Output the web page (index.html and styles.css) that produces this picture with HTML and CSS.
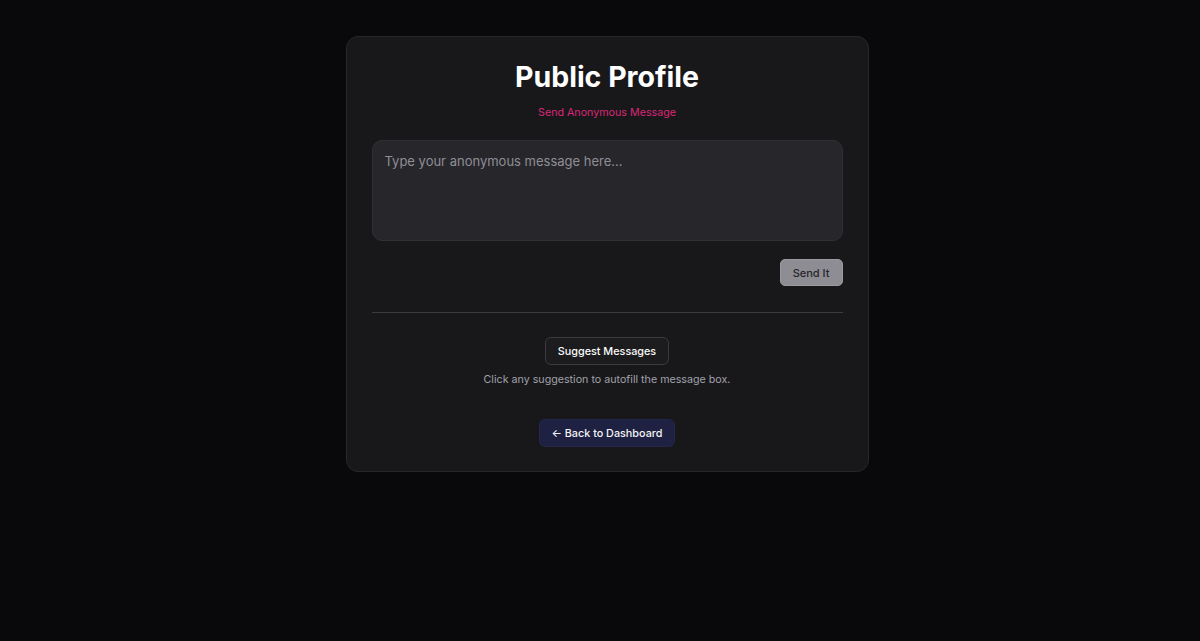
FILE: index.html
```html
<!DOCTYPE html>
<html lang="en">

<head>
    <meta charset="UTF-8">
    <meta name="viewport" content="width=device-width, initial-scale=1.0">
    <title>Public Profile</title>
    <link rel="stylesheet" href="styles.css">
</head>

<body>

    <div class="kartu">
        <h1 class="judul">Public Profile</h1>
        <p class="sub-judul">Send Anonymous Message</p>

        <textarea class="kotak-pesan" placeholder="Type your anonymous message here..."></textarea>

        <div class="baris-kirim">
            <button class="tombol-kirim">Send It</button>
        </div>

        <hr class="pemisah">

        <div class="saran">
            <button class="tombol-saran">Suggest Messages</button>
            <p class="catatan">Click any suggestion to autofill the message box.</p>
        </div>

        <div class="kembali">
            <button class="tombol-kembali">&larr; Back to Dashboard</button>
        </div>
    </div>

</body>

</html>
```

FILE: styles.css
```css
body {
    margin: 0;
    background-color: #09090b;
    font-family: Inter, "Liberation Sans", sans-serif;
    color: #fafafa;
}

.kartu {
    width: 471px;
    margin: 36px auto 0;
    padding: 22px 25px 24px;
    background-color: #18181b;
    border: 1px solid #27272a;
    border-radius: 12px;
    position: relative;
    left: 7px;
}

.judul {
    margin: 0;
    font-size: 28.5px;
    line-height: 36px;
    font-weight: 700;
    text-align: center;
    color: #ffffff;
}

.sub-judul {
    margin: 10px 0 0;
    font-size: 10.7px;
    line-height: 16px;
    text-align: center;
    color: #db2777;
}

.kotak-pesan {
    display: block;
    box-sizing: border-box;
    width: 100%;
    height: 101px;
    margin-top: 19px;
    padding: 10px 12px;
    background-color: #27262b;
    border: 1px solid #2f2f34;
    border-radius: 10px;
    color: #fafafa;
    font-family: inherit;
    font-size: 13px;
    line-height: 20px;
    resize: none;
    outline: none;
}

.kotak-pesan::placeholder {
    color: #8e8e95;
}

.baris-kirim {
    display: flex;
    justify-content: flex-end;
    margin-top: 18px;
}

button {
    font-family: inherit;
    cursor: pointer;
}

.tombol-kirim {
    height: 27px;
    padding: 0 12px;
    min-width: 61px;
    background-color: #8d8d93;
    border: 1px solid #9a9aa0;
    border-radius: 5px;
    color: #27272a;
    font-size: 11px;
    font-weight: 500;
}

.pemisah {
    margin: 26px 0 0;
    border: 0;
    border-top: 1px solid #3a3a40;
}

.saran {
    display: flex;
    flex-direction: column;
    align-items: center;
    margin-top: 24px;
}

.tombol-saran {
    height: 28px;
    padding: 0 12px;
    background-color: #1c1c1f;
    border: 1px solid #3a3a40;
    border-radius: 6px;
    color: #fafafa;
    font-size: 10.8px;
    font-weight: 500;
}

.catatan {
    margin: 7px 0 0;
    font-size: 10.7px;
    line-height: 16px;
    color: #a1a1aa;
}

.kembali {
    display: flex;
    justify-content: center;
    margin-top: 31px;
}

.tombol-kembali {
    height: 28px;
    padding: 0 12px;
    background-color: #1e2142;
    border: 1px solid #23264a;
    border-radius: 6px;
    color: #f4f4f5;
    font-size: 10.8px;
    font-weight: 500;
}
```
